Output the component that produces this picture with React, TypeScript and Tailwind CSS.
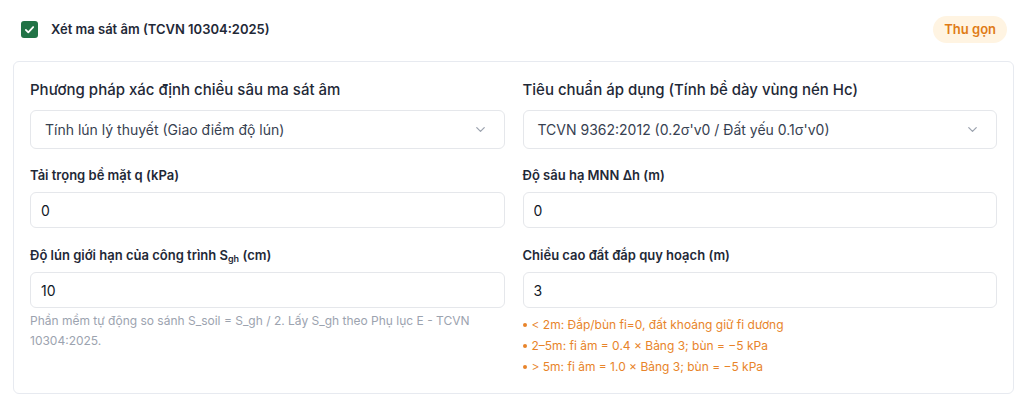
import { useState } from 'react';
import { FiChevronDown } from 'react-icons/fi';

const notes = [
  '< 2m: Đắp/bùn fi=0, đất khoáng giữ fi dương',
  '2–5m: fi âm = 0.4 × Bảng 3; bùn = −5 kPa',
  '> 5m: fi âm = 1.0 × Bảng 3; bùn = −5 kPa',
];

function SelectBox({ value }: { value: string }) {
  return (
    <div className="flex h-[39px] items-center justify-between rounded-md border border-[#e5e7eb] bg-white pl-[14px] pr-4 text-[14px] text-[#374151]">
      <span>{value}</span>
      <FiChevronDown className="text-[15px] text-[#9ca3af]" />
    </div>
  );
}

function NumberField({ label, value }: { label: React.ReactNode; value: string }) {
  return (
    <div className="flex flex-col">
      <label className="mb-2 text-[13px] font-semibold leading-[18px] text-[#1f2937]">{label}</label>
      <input
        defaultValue={value}
        className="h-[36px] rounded-md border border-[#e5e7eb] bg-white px-[10px] text-[14px] text-[#111827] outline-none"
      />
    </div>
  );
}

export default function App() {
  const [enabled, setEnabled] = useState(true);

  return (
    <div className="min-h-[403px] bg-white font-['Inter','Noto_Sans',sans-serif]">
      <div className="flex h-[61px] items-center justify-between pb-[2px] pl-[21px] pr-[17px]">
        <label className="flex items-center gap-[13px]">
          <button
            onClick={() => setEnabled(!enabled)}
            className="flex h-[17px] w-[17px] items-center justify-center rounded-[3px] bg-[#217346]"
          >
            {enabled && (
              <svg viewBox="0 0 16 16" className="h-[13px] w-[13px]" fill="none">
                <path d="M3.5 8.5l3 3 6-6.5" stroke="white" strokeWidth="2.2" strokeLinecap="round" strokeLinejoin="round" />
              </svg>
            )}
          </button>
          <span className="text-[13px] font-semibold text-[#1f2937]">Xét ma sát âm (TCVN 10304:2025)</span>
        </label>
        <button className="h-[27px] rounded-full bg-[#fff4e2] px-[11px] text-[13px] font-semibold text-[#e07b16]">
          Thu gọn
        </button>
      </div>

      <div className="ml-[13px] mr-[10px] grid grid-cols-2 gap-x-[18px] rounded-md border border-[#e7eaf0] p-4">
        <div className="flex flex-col">
          <h3 className="mb-[10px] mt-[2px] text-[15px] font-medium leading-[20px] text-[#1f2937]">
            Phương pháp xác định chiều sâu ma sát âm
          </h3>
          <SelectBox value="Tính lún lý thuyết (Giao điểm độ lún)" />
          <div className="mt-[17px] flex flex-col gap-[18px]">
            <NumberField label="Tải trọng bề mặt q (kPa)" value="0" />
            <NumberField
              label={
                <>
                  Độ lún giới hạn của công trình S<sub className="text-[9px]">gh</sub> (cm)
                </>
              }
              value="10"
            />
          </div>
          <p className="mt-[3px] text-[12px] leading-[20px] text-[#9ca3af]">
            Phần mềm tự động so sánh S_soil = S_gh / 2. Lấy S_gh theo Phụ lục E - TCVN 10304:2025.
          </p>
        </div>

        <div className="flex flex-col">
          <h3 className="mb-[10px] mt-[2px] text-[15px] font-medium leading-[20px] text-[#1f2937]">
            Tiêu chuẩn áp dụng (Tính bề dày vùng nén Hc)
          </h3>
          <SelectBox value="TCVN 9362:2012 (0.2σ'v0 / Đất yếu 0.1σ'v0)" />
          <div className="mt-[17px] flex flex-col gap-[18px]">
            <NumberField label="Độ sâu hạ MNN Δh (m)" value="0" />
            <NumberField label="Chiều cao đất đắp quy hoạch (m)" value="3" />
          </div>
          <ul className="mt-[6px] flex flex-col">
            {notes.map((n) => (
              <li key={n} className="flex items-center gap-[5px] text-[12px] leading-[21px] text-[#e8842a]">
                <span className="h-[4px] w-[4px] rounded-full bg-[#e8842a]" />
                {n}
              </li>
            ))}
          </ul>
        </div>
      </div>
    </div>
  );
}
